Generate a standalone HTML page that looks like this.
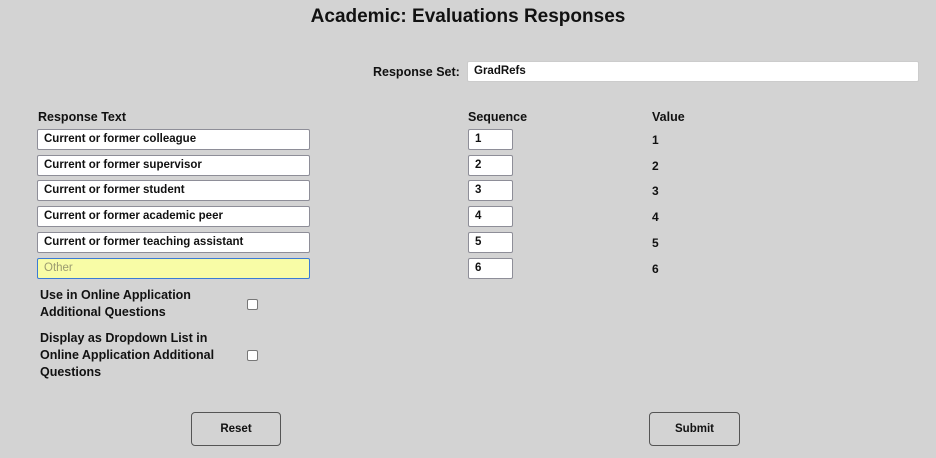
<!DOCTYPE html>
<html><head><style>
body{margin:0;width:936px;height:458px;background:#d3d3d3;font-family:"Liberation Sans",sans-serif;position:relative;overflow:hidden;color:#111}
.a{position:absolute}
h1{position:absolute;top:6px;left:0;width:936px;text-align:center;font-size:19px;font-weight:bold;margin:0}
.lbl{font-weight:bold;font-size:12.5px}
.in{position:absolute;background:#fff;border:1px solid #8e8e98;border-radius:2px;box-sizing:border-box;height:21px;font-size:11.5px;font-weight:bold;padding:0 6px;line-height:19px}
.cb{position:absolute;width:9px;height:9px;border:1px solid #777;background:#fff;border-radius:2px}
.btn{position:absolute;border:1px solid #555;border-radius:4px;background:#d3d3d3;box-sizing:border-box;height:34px;font-size:11.5px;font-weight:bold;text-align:center;line-height:33px}
.v{position:absolute;left:652px;font-size:12px;font-weight:bold}
</style></head><body>
<h1>Academic: Evaluations Responses</h1>
<div class="a lbl" style="left:373px;top:65px">Response Set:</div>
<div class="in" style="left:467px;top:61px;width:452px;height:21px;border-color:#ccc">GradRefs</div>
<div class="a lbl" style="left:38px;top:110px">Response Text</div>
<div class="a lbl" style="left:468px;top:110px">Sequence</div>
<div class="a lbl" style="left:652px;top:110px">Value</div>

<div class="in" style="left:37px;top:129px;width:273px">Current or former colleague</div>
<div class="in" style="left:37px;top:155px;width:273px">Current or former supervisor</div>
<div class="in" style="left:37px;top:180px;width:273px">Current or former student</div>
<div class="in" style="left:37px;top:206px;width:273px">Current or former academic peer</div>
<div class="in" style="left:37px;top:232px;width:273px">Current or former teaching assistant</div>
<div class="in" style="left:37px;top:258px;width:273px;background:#f8fca6;border:1px solid #3b7bd6;color:#9a9a70;font-weight:normal">Other</div>

<div class="in" style="left:468px;top:129px;width:45px">1</div>
<div class="in" style="left:468px;top:155px;width:45px">2</div>
<div class="in" style="left:468px;top:180px;width:45px">3</div>
<div class="in" style="left:468px;top:206px;width:45px">4</div>
<div class="in" style="left:468px;top:232px;width:45px">5</div>
<div class="in" style="left:468px;top:258px;width:45px">6</div>

<div class="v" style="top:133px">1</div>
<div class="v" style="top:159px">2</div>
<div class="v" style="top:184px">3</div>
<div class="v" style="top:210px">4</div>
<div class="v" style="top:236px">5</div>
<div class="v" style="top:262px">6</div>

<div class="a lbl" style="left:40px;top:287px;line-height:17px">Use in Online Application<br>Additional Questions</div>
<div class="cb" style="left:247px;top:299px"></div>
<div class="a lbl" style="left:40px;top:330px;line-height:17px">Display as Dropdown List in<br>Online Application Additional<br>Questions</div>
<div class="cb" style="left:247px;top:350px"></div>

<div class="btn" style="left:191px;top:412px;width:90px">Reset</div>
<div class="btn" style="left:649px;top:412px;width:91px">Submit</div>
</body></html>
